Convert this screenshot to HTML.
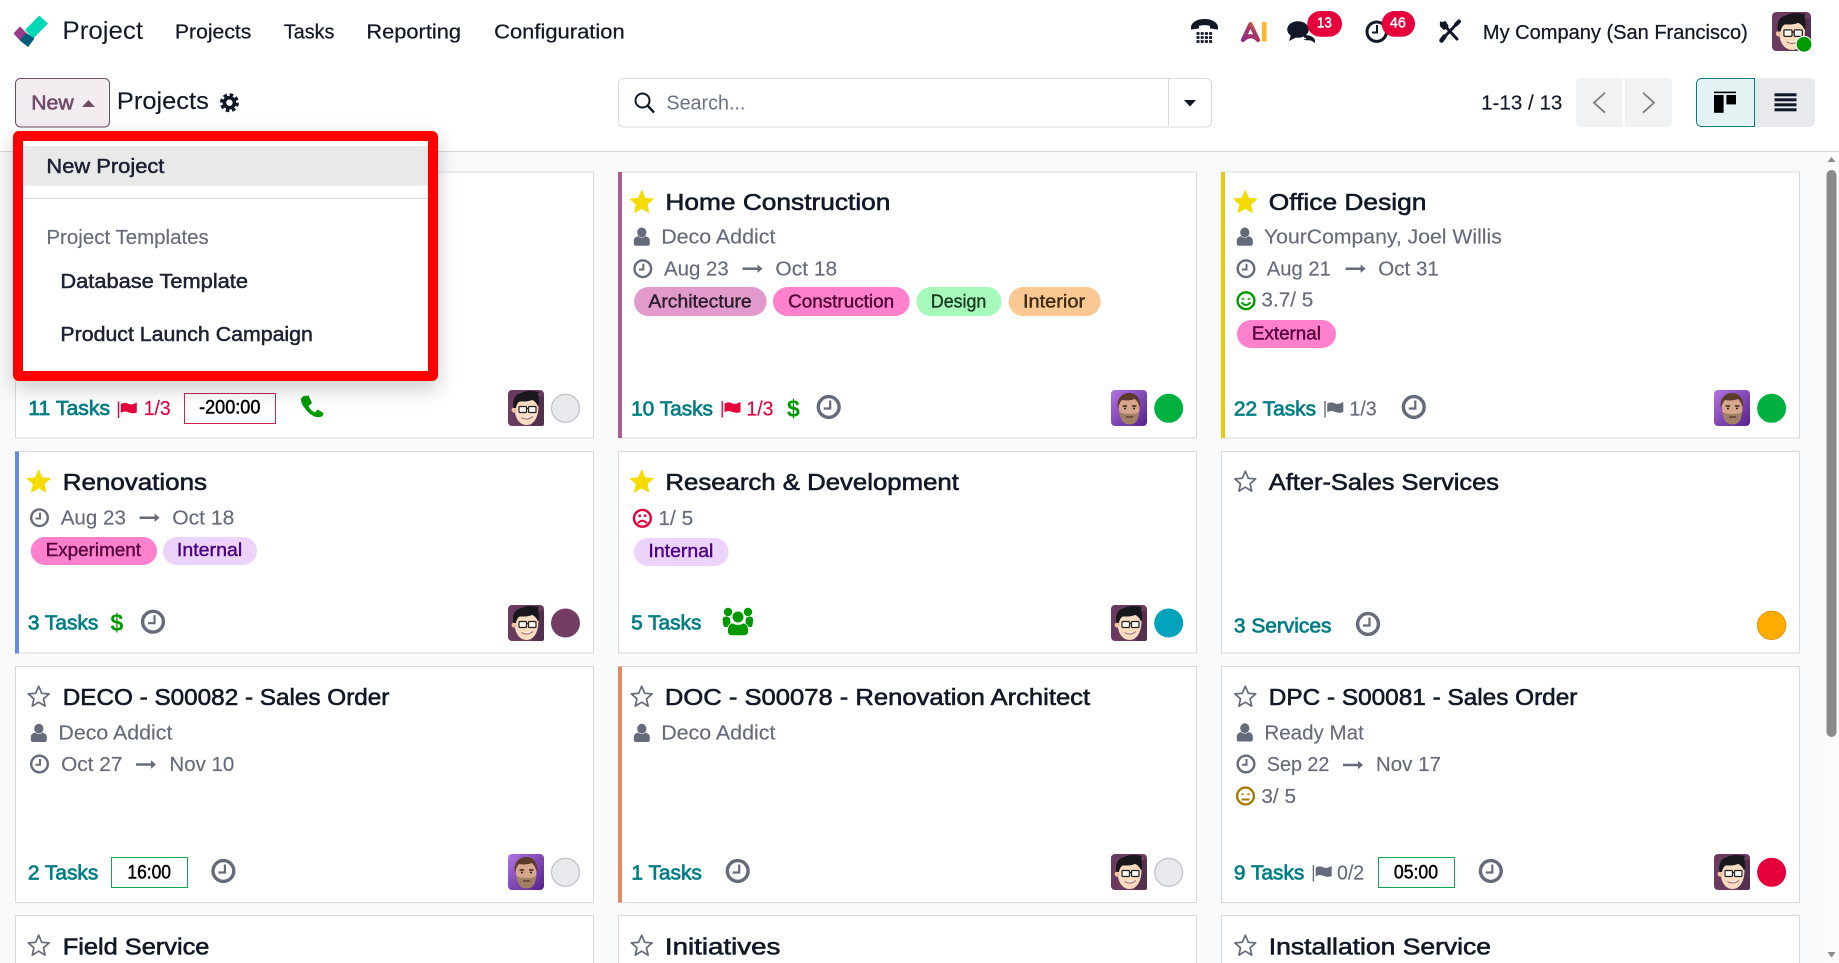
<!DOCTYPE html>
<html lang="en"><head><meta charset="utf-8"><title>Project - Projects</title>
<style>
html,body{margin:0;padding:0;background:#fff;width:1839px;height:963px;overflow:hidden}
svg{display:block}
text{font-family:"Liberation Sans",sans-serif;white-space:pre;transform:translate(-.6px,-.5px)}
.nav{font-size:20.5px;fill:#111827;stroke:#111827;stroke-width:.25}
.t{font-size:23.5px;fill:#111827;stroke:#111827;stroke-width:.6}
.g{font-size:20.5px;fill:#666b7b;stroke:#666b7b;stroke-width:.15}
.tl{font-size:20.5px;fill:#017e84;stroke:#017e84;stroke-width:.7}
.r{font-size:20.5px;fill:#e6003c;stroke:#e6003c;stroke-width:.15}
.d{font-size:19px;fill:#000;stroke:#000;stroke-width:.45}
.dl{font-size:20.5px;fill:#1c2133;stroke:#1c2133;stroke-width:.5}
.tg{font-size:18px;stroke-width:.4}
.bd{font-size:14.5px;fill:#fff;stroke:#fff;stroke-width:.4;text-anchor:middle}
.s{font-size:24px;font-weight:bold;fill:#009900}
</style></head><body>
<svg xmlns="http://www.w3.org/2000/svg" width="1839" height="963" viewBox="0 0 1839 963">
<defs>
<linearGradient id="aig" x1="0" y1="1" x2="1" y2="0"><stop offset="0" stop-color="#8e2f86"/><stop offset=".6" stop-color="#a8365f"/><stop offset="1" stop-color="#f08a2c"/></linearGradient>
<linearGradient id="pb" x1="0" y1="0" x2="1" y2="1"><stop offset="0" stop-color="#b274e0"/><stop offset="1" stop-color="#54208a"/></linearGradient>
<filter id="sh" x="-20%" y="-20%" width="140%" height="150%"><feDropShadow dx="0" dy="8" stdDeviation="10" flood-color="#000" flood-opacity=".2"/></filter>
<g id="st"><path d="M0-11.3 3.3-3.7 11.4-3 5.3 2.4 7.1 10.4 0 6.2-7.1 10.4-5.3 2.4-11.4-3-3.3-3.7Z" fill="#f6db00" stroke="#f6db00" stroke-linejoin="round"/></g>
<g id="so"><path d="M0-10.3 3-3.2 10.4-2.6 4.8 2.3 6.4 9.6 0 5.7-6.4 9.6-4.8 2.3-10.4-2.6-3-3.2Z" fill="none" stroke="#666b7b" stroke-width="1.7" stroke-linejoin="round"/></g>
<g id="ck" fill="none" stroke="#666b7b"><circle r="8.3" stroke-width="2.4"/><path d="M.5-5V.8H-4" stroke-width="2"/></g>
<g id="cb" fill="none" stroke="#666b7b"><circle r="10.4" stroke-width="3.4"/><path d="M1.5-6.5V1.5H-5" stroke-width="2.2"/></g>
<g id="pr" fill="#666b7b"><ellipse cx="8" cy="4.7" rx="4.6" ry="4.9"/><path d="M0 16V13C0 10.2 2.5 8.8 4.5 8.6 6.5 10.6 9.5 10.6 11.5 8.6 13.5 8.8 16 10.2 16 13V16C16 17.3 15 18 14 18H2C1 18 0 17.3 0 16Z"/></g>
<g id="ar"><path d="M0 0H16" stroke="#666b7b" stroke-width="2.5"/><path d="M15-4.2 20 0 15 4.2Z" fill="#666b7b"/></g>
<g id="fl"><rect x="0" y="0" width="1.4" height="16.5"/><path d="M3 2.5Q7 .5 10.5 2.2T19 1V11Q15 12.8 10.5 10.8T3 11.5Z"/></g>
<g id="a1"><rect width="36" height="36" rx="4" fill="#6b3b5f"/><rect x="24" y="6" width="12" height="30" rx="2" fill="#55304e"/>
<path d="M6.5 17C6.5 29 12 35 18.500 35 26 35 30.500 27 30.500 16L27 10H10Z" fill="#f9dcc0"/><circle cx="6.2" cy="20" r="2.6" fill="#eec3a0"/>
<path d="M5.500 18C4 10 7 4.500 12 3.500 17 .5 24 .5 31 2 29.500 3.500 30.500 5.500 30.500 7.500 31.500 10.500 31.500 14 30 16.500 28.500 12.500 26 10.500 24 10 20 12 14 11.500 11.500 11.500 9.500 13 8.500 15 8 18Z" fill="#17171c"/>
<g fill="#f8f8f4" stroke="#222" stroke-width="1.2"><rect x="11" y="16.500" width="7.500" height="6" rx="1"/><rect x="20.500" y="16.500" width="7.500" height="6" rx="1"/></g><path d="M18.500 18.500H20.500" stroke="#222" stroke-width="1.2"/>
<path d="M13.500 27.500Q19 31 25 26.500" fill="#fff" stroke="#a55" stroke-width="1"/></g>
<g id="a2"><rect width="36" height="36" rx="4" fill="url(#pb)"/><path d="M8 16C8 28 12 34 18.500 34 25 34 28.500 28 28.500 16 28 8 24 5 18.500 5 13 5 8.500 8 8 16Z" fill="#d6a78c"/>
<path d="M7 18C5 8 12 3 18 3 25 3 30 8 29 18 27 13 26 10 23.500 9 19 11 13 10.500 11 10 9 12 8.500 14 7 18Z" fill="#5b3b2c"/>
<path d="M8.500 21C10 24 13 23.500 18.500 24 24 23.500 26.500 24 28 21 28 29 25 34.500 18.500 34.500 12 34.500 9 29 8.500 21Z" fill="#a08064"/>
<path d="M11.500 16H16M21 16H25.500" stroke="#3b241b" stroke-width="1.6"/><circle cx="14" cy="18.500" r="1" fill="#222"/><circle cx="23" cy="18.500" r="1" fill="#222"/><path d="M15 27H22" stroke="#5c3d2d" stroke-width="1.400"/></g>
</defs>

<rect width="1839" height="963" fill="#fff"/>

<!-- content background -->
<rect y="151" width="1839" height="812" fill="#f9fafb"/>
<rect y="151" width="1839" height="1" fill="#d8dadd"/>
<rect x="1824" y="152" width="15" height="811" fill="#fbfbfb"/>
<rect x="1826.500" y="170" width="10" height="567" rx="5" fill="#8a8a8a"/>
<path d="M1827.500 162 1831.500 157 1835.500 162Z" fill="#8a8a8a"/><path d="M1827.500 952 1831.500 957.500 1835.500 952Z" fill="#8a8a8a"/>

<!-- NAVBAR -->
<g stroke-linejoin="round" stroke-width="1.500">
<path d="M39.300 16.500 47 23.500 33.300 37.500 26 30Z" fill="#01d8b4" stroke="#01d8b4"/>
<path d="M14.500 33.500 20 27.500 26.500 34 20.500 40Z" fill="#9b3a8c" stroke="#9b3a8c"/>
<path d="M20.500 40 26.500 34 33.500 38.500 28 46Z" fill="#015f7c" stroke="#015f7c"/>
</g>
<text x="63" y="39.500" font-size="25" fill="#111827" textLength="80.700" lengthAdjust="spacingAndGlyphs">Project</text>
<text class="nav" x="175.500" y="39" textLength="76.500" lengthAdjust="spacingAndGlyphs">Projects</text>
<text class="nav" x="284.500" y="39" textLength="50.500" lengthAdjust="spacingAndGlyphs">Tasks</text>
<text class="nav" x="367" y="39" textLength="94.600" lengthAdjust="spacingAndGlyphs">Reporting</text>
<text class="nav" x="494.700" y="39" textLength="130.600" lengthAdjust="spacingAndGlyphs">Configuration</text>

<!-- systray -->
<path d="M1191.500 29C1190.500 23 1197 19.500 1204.500 19.500 1212 19.500 1218.500 23 1217.500 29L1210.500 28V25.500C1207 24.500 1202 24.500 1198.500 25.500V28Z" fill="#111827" stroke="#111827" stroke-linejoin="round"/>
<g stroke="#111827" stroke-width="2.800" stroke-dasharray="3 1.200"><path d="M1196.500 33.500H1213"/><path d="M1196.500 37.500H1213"/><path d="M1196.500 41.500H1213"/></g>
<path d="M1243 40 1250.500 24 1258 40C1254 35 1248 35 1243 40Z" fill="none" stroke="url(#aig)" stroke-width="4.200" stroke-linejoin="round"/>
<rect x="1261.800" y="22" width="4.800" height="19.500" fill="#fbb82f"/>
<path d="M1304 35C1310 35 1316 37 1315 43L1311 40.500 1304 40Z" fill="#111827"/>
<ellipse cx="1298" cy="29.500" rx="10.800" ry="8.300" fill="#111827"/><path d="M1291 35 1289 41 1297 37Z" fill="#111827"/>
<path d="M1300 38.500H1306" stroke="#fff" stroke-width="1.500"/>
<rect x="1307.300" y="11" width="34.700" height="25.700" rx="12.800" fill="#e6003c"/>
<text class="bd" x="1325" y="28" textLength="15" lengthAdjust="spacingAndGlyphs">13</text>
<g fill="none" stroke="#111827"><circle cx="1376.700" cy="31.700" r="9.700" stroke-width="3"/><path d="M1377 25V32.500H1372" stroke-width="2"/></g>
<rect x="1381.700" y="11" width="33.300" height="25.700" rx="12.800" fill="#e6003c"/>
<text class="bd" x="1398.500" y="28" textLength="16" lengthAdjust="spacingAndGlyphs">46</text>
<g stroke="#111827" fill="none" stroke-linecap="round">
<path d="M1445 26 1457 39" stroke-width="3"/><path d="M1440.500 22 1440.500 26 1444 29.500 1448 26 1445 21.500" fill="#111827" stroke-width="1.200" stroke-linejoin="round"/>
<path d="M1456.500 24 1443.500 38" stroke-width="2.800"/><path d="M1459 21.500 1456 24.500" stroke-width="4"/><path d="M1441.500 40.500 1444.500 36.500" stroke-width="4.500"/>
</g>
<text class="nav" x="1483.500" y="39.300" textLength="264.900" lengthAdjust="spacingAndGlyphs">My Company (San Francisco)</text>
<use href="#a1" transform="translate(1772 12) scale(1.083)"/>
<circle cx="1804" cy="44.300" r="8" fill="#009900" stroke="#fff" stroke-width="1.200"/>

<!-- CONTROL PANEL -->
<rect x="15.500" y="78.500" width="94" height="48.500" rx="5" fill="#f3edf2" stroke="#714b67"/>
<text x="31.800" y="110" font-size="20.500" fill="#714b67" stroke="#714b67" stroke-width=".6" textLength="42.500" lengthAdjust="spacingAndGlyphs">New</text>
<path d="M82 107 88.500 100 95 107Z" fill="#714b67"/>
<text x="117.500" y="109.300" font-size="24.500" fill="#111827" stroke="#111827" stroke-width=".15" textLength="91.900" lengthAdjust="spacingAndGlyphs">Projects</text>
<g transform="translate(229.400 102.700)"><circle r="8" fill="none" stroke="#111827" stroke-width="3" stroke-dasharray="3.600 2.680"/><circle r="5" fill="none" stroke="#111827" stroke-width="3.600"/></g>

<rect x="618.500" y="78.500" width="593" height="48.500" rx="5" fill="#fff" stroke="#d8dadd"/>
<path d="M1168.500 79V127" stroke="#d8dadd"/>
<g fill="none" stroke="#111827"><circle cx="642.500" cy="100.500" r="7" stroke-width="2"/><path d="M647.500 105.500 654 112.500" stroke-width="2.400"/></g>
<text x="667" y="110" font-size="20.500" fill="#6b7280" textLength="79" lengthAdjust="spacingAndGlyphs">Search...</text>
<path d="M1184 100H1196L1190 106.500Z" fill="#111827"/>

<text x="1481.700" y="110" font-size="20.500" fill="#111827" stroke="#111827" stroke-width=".15" textLength="81.300" lengthAdjust="spacingAndGlyphs">1-13 / 13</text>
<path d="M1581 78H1622.500V127H1581A5 5 0 0 1 1576 122V83A5 5 0 0 1 1581 78Z" fill="#f1f2f4"/>
<path d="M1625 78H1667A5 5 0 0 1 1672 83V122A5 5 0 0 1 1667 127H1625Z" fill="#f1f2f4"/>
<path d="M1605 92.700 1594 102.700 1605 112.700" fill="none" stroke="#808080" stroke-width="1.800"/>
<path d="M1643 92.700 1654 102.700 1643 112.700" fill="none" stroke="#808080" stroke-width="1.800"/>
<path d="M1754 78H1810A5 5 0 0 1 1815 83V122A5 5 0 0 1 1810 127H1754Z" fill="#e7e9ed"/>
<path d="M1754.500 78.500H1701A5 5 0 0 0 1696.500 83V122A5 5 0 0 0 1701 126.500H1754.500Z" fill="#e3f3f3" stroke="#017e84"/>
<g fill="#000"><rect x="1714" y="91.600" width="22" height="1.600"/><rect x="1714" y="95" width="9.600" height="17.800"/><rect x="1726.400" y="95" width="9.600" height="9.400"/></g>
<g fill="#111827"><rect x="1774.500" y="93.300" width="22" height="3"/><rect x="1774.500" y="98.300" width="22" height="3"/><rect x="1774.500" y="103.300" width="22" height="3"/><rect x="1774.500" y="108.300" width="22" height="3"/></g>

<!-- CARDS COL 1 -->
<g>
<rect x="15.500" y="172" width="578" height="266" fill="#fff" stroke="#d8dadd"/>
<text class="tl" x="28.900" y="415.700" textLength="81.800" lengthAdjust="spacingAndGlyphs">11 Tasks</text>
<use href="#fl" x="117.800" y="401.500" fill="#e6003c"/>
<text class="r" x="144.300" y="415.700" textLength="26.900" lengthAdjust="spacingAndGlyphs">1/3</text>
<rect x="184.500" y="393.500" width="91" height="30" fill="#fff" stroke="#c8254f"/>
<text class="d" x="199.700" y="414" textLength="61.300" lengthAdjust="spacingAndGlyphs">-200:00</text>
<path d="M304 396 308.500 395.500 312 403 308.500 406C310 409 312 411 315 412.500L317.500 409.500 323.500 413 322.500 416C319 418.500 313.500 417 309 413 304.500 408.500 300.500 403 301 399 301.500 397.500 302.500 396.500 304 396Z" fill="#009900"/>
<use href="#a1" x="508" y="390"/>
<circle cx="565.500" cy="408.300" r="14" fill="#e7e9ed" stroke="#c0c3c8" stroke-width="1.300"/>
</g>

<g>
<rect x="15.500" y="451.500" width="578" height="201.500" fill="#fff" stroke="#d8dadd"/><rect x="15" y="451.500" width="4" height="202" fill="#6a89e0"/>
<use href="#st" x="38.700" y="481.500"/>
<text class="t" x="63.300" y="490.500" textLength="144.300" lengthAdjust="spacingAndGlyphs">Renovations</text>
<use href="#ck" x="39.500" y="517.700"/>
<text class="g" x="61.300" y="525" textLength="65.200" lengthAdjust="spacingAndGlyphs">Aug 23</text>
<use href="#ar" x="139.600" y="517.700"/>
<text class="g" x="172.800" y="525" textLength="62.100" lengthAdjust="spacingAndGlyphs">Oct 18</text>
<rect x="30.800" y="537" width="126.200" height="28" rx="14" fill="#ff80cc"/>
<text class="tg" fill="#55003a" stroke="#55003a" x="46.300" y="556.700" textLength="95.300" lengthAdjust="spacingAndGlyphs">Experiment</text>
<rect x="163" y="537" width="94" height="28" rx="14" fill="#ebd3fb"/>
<text class="tg" fill="#4b0082" stroke="#4b0082" x="177.500" y="556.700" textLength="65.300" lengthAdjust="spacingAndGlyphs">Internal</text>
<text class="tl" x="28.500" y="630" textLength="70.400" lengthAdjust="spacingAndGlyphs">3 Tasks</text>
<text class="s" x="111" y="631" textLength="13" lengthAdjust="spacingAndGlyphs">$</text>
<use href="#cb" x="153" y="621.700"/>
<use href="#a1" x="508" y="605"/>
<circle cx="565.500" cy="623" r="14.500" fill="#733d62"/>
</g>

<g>
<rect x="15.500" y="666.500" width="578" height="236" fill="#fff" stroke="#d8dadd"/>
<use href="#so" x="38.700" y="696.500"/>
<text class="t" x="63.300" y="705.700" textLength="326.700" lengthAdjust="spacingAndGlyphs">DECO - S00082 - Sales Order</text>
<use href="#pr" x="30.800" y="724"/>
<text class="g" x="59" y="740" textLength="114" lengthAdjust="spacingAndGlyphs">Deco Addict</text>
<use href="#ck" x="39.500" y="764"/>
<text class="g" x="61.700" y="771.300" textLength="61.300" lengthAdjust="spacingAndGlyphs">Oct 27</text>
<use href="#ar" x="136" y="764.500"/>
<text class="g" x="170" y="771.300" textLength="64.900" lengthAdjust="spacingAndGlyphs">Nov 10</text>
<text class="tl" x="28.500" y="880" textLength="70.400" lengthAdjust="spacingAndGlyphs">2 Tasks</text>
<rect x="111.500" y="857.500" width="76" height="30" fill="#fff" stroke="#12a74b"/>
<text class="d" x="128" y="879" textLength="43.600" lengthAdjust="spacingAndGlyphs">16:00</text>
<use href="#cb" x="223.400" y="871"/>
<use href="#a2" x="508" y="854"/>
<circle cx="565.500" cy="872.300" r="14" fill="#e7e9ed" stroke="#c0c3c8" stroke-width="1.300"/>
</g>

<g>
<rect x="15.500" y="915.500" width="578" height="60" fill="#fff" stroke="#d8dadd"/>
<use href="#so" x="38.700" y="945.500"/>
<text class="t" x="63.300" y="954.800" textLength="146.700" lengthAdjust="spacingAndGlyphs">Field Service</text>
</g>

<!-- CARDS COL 2 -->
<g>
<rect x="618.500" y="172" width="578" height="266" fill="#fff" stroke="#d8dadd"/><rect x="618" y="172" width="4" height="266" fill="#a95d93"/>
<use href="#st" x="641.700" y="202"/>
<text class="t" x="666" y="210.700" textLength="225" lengthAdjust="spacingAndGlyphs">Home Construction</text>
<use href="#pr" x="633.800" y="227.700"/>
<text class="g" x="661.800" y="244" textLength="114.200" lengthAdjust="spacingAndGlyphs">Deco Addict</text>
<use href="#ck" x="642.800" y="268.700"/>
<text class="g" x="664.600" y="276" textLength="64.800" lengthAdjust="spacingAndGlyphs">Aug 23</text>
<use href="#ar" x="742.500" y="268.700"/>
<text class="g" x="776" y="276" textLength="61.800" lengthAdjust="spacingAndGlyphs">Oct 18</text>
<rect x="634" y="287" width="132.600" height="29" rx="14.500" fill="#e19acb"/>
<text class="tg" fill="#2a1e2b" stroke="#2a1e2b" x="649" y="308" textLength="103.300" lengthAdjust="spacingAndGlyphs">Architecture</text>
<rect x="773" y="287" width="136.700" height="29" rx="14.500" fill="#ff80cc"/>
<text class="tg" fill="#4c0030" stroke="#4c0030" x="788.700" y="308" textLength="106" lengthAdjust="spacingAndGlyphs">Construction</text>
<rect x="916.400" y="287" width="85.100" height="29" rx="14.500" fill="#a6f9bb"/>
<text class="tg" fill="#1a3a22" stroke="#1a3a22" x="931.500" y="308" textLength="55.300" lengthAdjust="spacingAndGlyphs">Design</text>
<rect x="1008.600" y="287" width="92.100" height="29" rx="14.500" fill="#f9c893"/>
<text class="tg" fill="#3c2a12" stroke="#3c2a12" x="1023.600" y="308" textLength="62.100" lengthAdjust="spacingAndGlyphs">Interior</text>
<text class="tl" x="631.700" y="416" textLength="81.900" lengthAdjust="spacingAndGlyphs">10 Tasks</text>
<use href="#fl" x="721.500" y="401" fill="#e6003c"/>
<text class="r" x="747" y="416" textLength="27" lengthAdjust="spacingAndGlyphs">1/3</text>
<text class="s" x="787.500" y="417" textLength="13" lengthAdjust="spacingAndGlyphs">$</text>
<use href="#cb" x="828.700" y="407"/>
<use href="#a2" x="1111" y="390"/>
<circle cx="1168.700" cy="408.300" r="14.500" fill="#00b140"/>
</g>

<g>
<rect x="618.500" y="451.500" width="578" height="201.500" fill="#fff" stroke="#d8dadd"/>
<use href="#st" x="641.700" y="481.500"/>
<text class="t" x="666" y="490.700" textLength="293.500" lengthAdjust="spacingAndGlyphs">Research &amp; Development</text>
<g fill="none" stroke="#e6003c" transform="translate(642.400 518.300)"><circle r="8.400" stroke-width="2.400"/><path d="M-4.500 5Q0 0 4.500 5" stroke-width="2"/><path d="M-4-2.500H-1.500M1.500-2.500H4" stroke-width="2.500"/></g>
<text class="g" x="659" y="525.300" textLength="34.800" lengthAdjust="spacingAndGlyphs">1/ 5</text>
<rect x="634" y="538" width="94.600" height="28" rx="14" fill="#ebd3fb"/>
<text class="tg" fill="#4b0082" stroke="#4b0082" x="649" y="557.700" textLength="65" lengthAdjust="spacingAndGlyphs">Internal</text>
<text class="tl" x="631.700" y="630" textLength="70.300" lengthAdjust="spacingAndGlyphs">5 Tasks</text>
<g fill="#009900"><circle cx="728" cy="612" r="4.200"/><circle cx="748" cy="612" r="4.200"/><path d="M722.700 619C722.700 617 725 616.500 727 616.500L730 618 731 627H724.500C723 625 722.700 622 722.700 619Z"/><path d="M753 619C753 617 751 616.500 749 616.500L746 618 745 627H751.500C753 625 753 622 753 619Z"/></g>
<circle cx="738" cy="617" r="6" fill="#009900" stroke="#fff" stroke-width="1"/>
<path d="M727.500 631C727.500 625.500 730 623 733 623 735.500 625 740.500 625 743 623 746 623 748.500 625.500 748.500 631 748.500 634.500 746.500 635.700 744 635.700H732C729.500 635.700 727.500 634.500 727.500 631Z" fill="#009900" stroke="#fff" stroke-width=".8"/>
<use href="#a1" x="1111" y="605"/>
<circle cx="1168.700" cy="623" r="14.500" fill="#01a2bb"/>
</g>

<g>
<rect x="618.500" y="666.500" width="578" height="236" fill="#fff" stroke="#d8dadd"/><rect x="618" y="666.500" width="4" height="236" fill="#e28a63"/>
<use href="#so" x="641.700" y="696.500"/>
<text class="t" x="665.500" y="705.700" textLength="425.200" lengthAdjust="spacingAndGlyphs">DOC - S00078 - Renovation Architect</text>
<use href="#pr" x="633.800" y="724"/>
<text class="g" x="661.800" y="740" textLength="114.200" lengthAdjust="spacingAndGlyphs">Deco Addict</text>
<text class="tl" x="632" y="880" textLength="70.500" lengthAdjust="spacingAndGlyphs">1 Tasks</text>
<use href="#cb" x="737.700" y="871"/>
<use href="#a1" x="1111" y="854"/>
<circle cx="1168.700" cy="872.300" r="14" fill="#e7e9ed" stroke="#c0c3c8" stroke-width="1.300"/>
</g>

<g>
<rect x="618.500" y="915.500" width="578" height="60" fill="#fff" stroke="#d8dadd"/>
<use href="#so" x="641.700" y="945.500"/>
<text class="t" x="665.500" y="954.800" textLength="115.500" lengthAdjust="spacingAndGlyphs">Initiatives</text>
</g>

<!-- CARDS COL 3 -->
<g>
<rect x="1221.500" y="172" width="578" height="266" fill="#fff" stroke="#d8dadd"/><rect x="1221" y="172" width="4" height="266" fill="#eac905"/>
<use href="#st" x="1245.300" y="202"/>
<text class="t" x="1269.400" y="210.700" textLength="157.600" lengthAdjust="spacingAndGlyphs">Office Design</text>
<use href="#pr" x="1236.800" y="227.700"/>
<text class="g" x="1264.600" y="244" textLength="237.800" lengthAdjust="spacingAndGlyphs">YourCompany, Joel Willis</text>
<use href="#ck" x="1246" y="268.700"/>
<text class="g" x="1267.400" y="276" textLength="64.100" lengthAdjust="spacingAndGlyphs">Aug 21</text>
<use href="#ar" x="1345.600" y="268.700"/>
<text class="g" x="1378.900" y="276" textLength="60.500" lengthAdjust="spacingAndGlyphs">Oct 31</text>
<g fill="none" stroke="#009900" transform="translate(1246 300.700)"><circle r="8.400" stroke-width="2.400"/><path d="M-4.500 1.500Q0 7 4.500 1.500" stroke-width="2"/><path d="M-3-2.500V-1M3-2.500V-1" stroke-width="2.500"/></g>
<text class="g" x="1262" y="307" textLength="51.900" lengthAdjust="spacingAndGlyphs">3.7/ 5</text>
<rect x="1237" y="320" width="99" height="28" rx="14" fill="#ff80cc"/>
<text class="tg" fill="#55003a" stroke="#55003a" x="1252.500" y="340" textLength="69" lengthAdjust="spacingAndGlyphs">External</text>
<text class="tl" x="1234.500" y="416" textLength="82.200" lengthAdjust="spacingAndGlyphs">22 Tasks</text>
<use href="#fl" x="1324.300" y="401" fill="#666b7b"/>
<text class="g" x="1350" y="416" textLength="27.300" lengthAdjust="spacingAndGlyphs">1/3</text>
<use href="#cb" x="1413.800" y="407"/>
<use href="#a2" x="1714" y="390"/>
<circle cx="1771.600" cy="408.300" r="14.500" fill="#00b140"/>
</g>

<g>
<rect x="1221.500" y="451.500" width="578" height="201.500" fill="#fff" stroke="#d8dadd"/>
<use href="#so" x="1245.300" y="481.500"/>
<text class="t" x="1269.400" y="490.700" textLength="230.200" lengthAdjust="spacingAndGlyphs">After-Sales Services</text>
<text class="tl" x="1234.500" y="633" textLength="97.500" lengthAdjust="spacingAndGlyphs">3 Services</text>
<use href="#cb" x="1368" y="624"/>
<circle cx="1771.600" cy="625.300" r="14.200" fill="#ffac00" stroke="#e09a10"/>
</g>

<g>
<rect x="1221.500" y="666.500" width="578" height="236" fill="#fff" stroke="#d8dadd"/>
<use href="#so" x="1245.300" y="696.500"/>
<text class="t" x="1269.400" y="705.700" textLength="308.600" lengthAdjust="spacingAndGlyphs">DPC - S00081 - Sales Order</text>
<use href="#pr" x="1236.800" y="723.500"/>
<text class="g" x="1265" y="740" textLength="99.400" lengthAdjust="spacingAndGlyphs">Ready Mat</text>
<use href="#ck" x="1246" y="764"/>
<text class="g" x="1267.400" y="771.700" textLength="62.600" lengthAdjust="spacingAndGlyphs">Sep 22</text>
<use href="#ar" x="1343" y="765"/>
<text class="g" x="1376.500" y="771.700" textLength="65" lengthAdjust="spacingAndGlyphs">Nov 17</text>
<g fill="none" stroke="#a67c00" transform="translate(1245.500 796)"><circle r="8.400" stroke-width="2.400"/><path d="M-4 3.500H4" stroke-width="2"/><path d="M-3-2.500V-1M3-2.500V-1" stroke-width="2.500"/></g>
<text class="g" x="1262" y="803.300" textLength="34.600" lengthAdjust="spacingAndGlyphs">3/ 5</text>
<text class="tl" x="1234.500" y="880" textLength="70.500" lengthAdjust="spacingAndGlyphs">9 Tasks</text>
<use href="#fl" x="1312.700" y="865" fill="#666b7b"/>
<text class="g" x="1337.600" y="880" textLength="27.200" lengthAdjust="spacingAndGlyphs">0/2</text>
<rect x="1378.500" y="857.500" width="76" height="30" fill="#fff" stroke="#12a74b"/>
<text class="d" x="1394.500" y="879" textLength="44.100" lengthAdjust="spacingAndGlyphs">05:00</text>
<use href="#cb" x="1490.800" y="871"/>
<use href="#a1" x="1714" y="854"/>
<circle cx="1771.600" cy="872.300" r="14.500" fill="#e6003c"/>
</g>

<g>
<rect x="1221.500" y="915.500" width="578" height="60" fill="#fff" stroke="#d8dadd"/>
<use href="#so" x="1245.300" y="945.500"/>
<text class="t" x="1269.400" y="954.800" textLength="222.200" lengthAdjust="spacingAndGlyphs">Installation Service</text>
</g>

<!-- DROPDOWN -->
<g>
<rect x="13" y="131" width="425" height="250" rx="6" fill="#ff0000" filter="url(#sh)"/>
<rect x="23" y="141" width="405" height="230" fill="#fff"/>
<rect x="23" y="146" width="405" height="39.700" fill="#e9e9e9"/>
<rect x="23" y="198" width="405" height="1" fill="#d8dadd"/>
<text class="dl" x="47" y="173.300" textLength="118" lengthAdjust="spacingAndGlyphs">New Project</text>
<text x="47" y="244.300" font-size="20.500" fill="#666b7b" stroke="#666b7b" stroke-width=".15" textLength="162.400" lengthAdjust="spacingAndGlyphs">Project Templates</text>
<text class="dl" x="61" y="288.300" textLength="187.600" lengthAdjust="spacingAndGlyphs">Database Template</text>
<text class="dl" x="61" y="341.300" textLength="252.500" lengthAdjust="spacingAndGlyphs">Product Launch Campaign</text>
</g>
</svg>
</body></html>
